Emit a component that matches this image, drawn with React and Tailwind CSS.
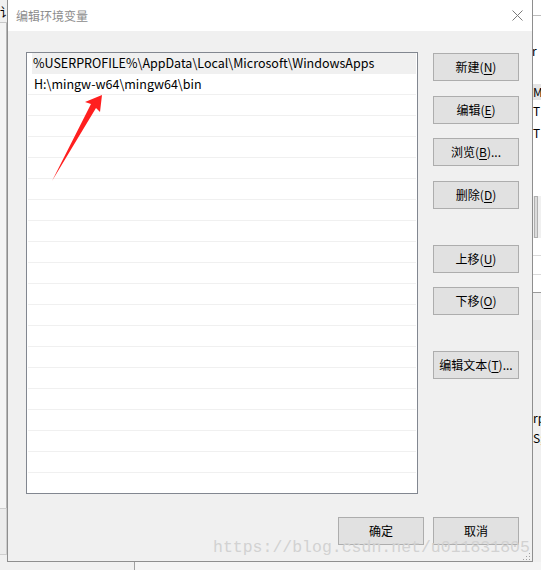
import React from 'react'

const ui = { fontFamily: '"Noto Sans CJK SC", "Noto Sans", sans-serif' }

const paths = [
  '%USERPROFILE%\\AppData\\Local\\Microsoft\\WindowsApps',
  'H:\\mingw-w64\\mingw64\\bin',
]

function Btn({ label, hot, tail = '', className = '' }) {
  return (
    <div
      className={`h-[28px] w-[86px] flex items-center justify-center bg-[#e1e1e1] border border-[#adadad] text-[12px] text-black leading-none ${className}`}
    >
      {label}
      {hot && (
        <>
          (<span className="underline underline-offset-2">{hot}</span>)
        </>
      )}
      {tail}
    </div>
  )
}

export default function App() {
  const emptyRows = Array.from({ length: 18 })

  return (
    <div className="relative w-[541px] h-[570px] overflow-hidden bg-[#f0f0f0]" style={ui}>
      <div className="flex h-[562px]">
        {/* window behind, left */}
        <div className="w-[7px] flex flex-col">
          <div className="h-[23px] border-b border-[#c8c8c8] bg-[#f0f0f0] text-[12px] leading-[23px] overflow-hidden whitespace-nowrap">讠</div>
          <div className="h-[485px] bg-[#f4f4f4] border-r border-[#b8b8b8]" />
          <div className="h-[47px] bg-[#ececec] border-t border-[#cfcfcf] border-b border-r border-[#b8b8b8]" />
        </div>

        {/* dialog */}
        <div className="w-[526px] h-[562px] flex flex-col border border-t-0 border-[#8e8e8e] bg-[#f0f0f0] shadow-[2px_0_3px_rgba(0,0,0,0.2)]">
          <div className="h-[31px] bg-white flex items-center justify-between pl-[8px] pr-[9px]">
            <span className="text-[12px] text-[#8c8c8c]">编辑环境变量</span>
            <svg width="11" height="11" viewBox="0 0 11 11">
              <path d="M0.5 0.5L10.5 10.5M10.5 0.5L0.5 10.5" stroke="#7a7a7a" strokeWidth="1" fill="none" />
            </svg>
          </div>

          <div className="flex-1 flex flex-col pl-[18px] pr-[13px] pt-[21px]">
            <div className="flex gap-[15px]">
              {/* list */}
              <div className="w-[392px] h-[442px] border border-[#828790] bg-white pl-[1px] pr-[1px] overflow-hidden">
                <div className="h-[21px] pl-[4px]">
                  <div className="h-full bg-[#f0f0f0] flex items-center pl-[1px] text-[12.5px] text-black whitespace-nowrap">
                    {paths[0]}
                  </div>
                </div>
                <div className="h-[21px] border-b border-[#f0f0f0] flex items-center pl-[6px] text-[12.5px] text-black">
                  {paths[1]}
                </div>
                {emptyRows.map((_, i) => (
                  <div key={i} className="h-[21px] border-b border-[#f0f0f0]" />
                ))}
              </div>

              {/* button column */}
              <div className="w-[86px] flex flex-col pt-[1px]">
                <Btn label="新建" hot="N" />
                <Btn label="编辑" hot="E" className="mt-[15px]" />
                <Btn label="浏览" hot="B" tail="..." className="mt-[14px]" />
                <Btn label="删除" hot="D" className="mt-[15px]" />
                <Btn label="上移" hot="U" className="mt-[36px]" />
                <Btn label="下移" hot="O" className="mt-[14px]" />
                <Btn label="编辑文本" hot="T" tail="..." className="mt-[36px]" />
              </div>
            </div>

            <div className="flex justify-end gap-[9px] mt-[23px]">
              <Btn label="确定" />
              <Btn label="取消" />
            </div>
          </div>
        </div>

        {/* window behind, right */}
        <div className="w-[8px] flex flex-col text-[12px] text-black overflow-hidden whitespace-nowrap">
          <div className="h-[16px] bg-white border-b border-[#bdbdbd]" />
          <div className="h-[68px] bg-white pt-[29px] leading-none">
            <span className="block -ml-[1px]">r</span>
          </div>
          <div className="h-[16px] bg-[#e5e5e5] leading-[16px]">M</div>
          <div className="h-[22px] bg-white leading-[22px]">T</div>
          <div className="h-[22px] bg-white leading-[22px]">T</div>
          <div className="h-[52px] bg-white" />
          <div className="h-[42px] bg-[#f0f0f0] pl-[1px]">
            <div className="w-[4px] h-full bg-[#dcdcdc] border border-[#b0b0b0]" />
          </div>
          <div className="h-[18px] border-b border-[#dadada] bg-white" />
          <div className="h-[19px] border-b border-[#dadada] bg-white" />
          <div className="h-[18px] border-b border-[#9a9a9a] bg-white" />
          <div className="h-[27px] bg-[#f0f0f0]" />
          <div className="h-[20px] bg-[#e6e6e6]" />
          <div className="h-[68px] bg-[#f0f0f0]" />
          <div className="h-[20px] leading-[20px] bg-[#f0f0f0]">rp</div>
          <div className="h-[20px] leading-[20px] bg-[#f0f0f0]">S;</div>
          <div className="flex-1 bg-[#f0f0f0]" />
        </div>
      </div>

      {/* strip under the dialog */}
      <div className="flex h-[8px]">
        <div className="w-[135px] bg-[#f0f0f0] border-r border-[#a0a0a0]" />
        <div className="flex-1 bg-[#f4f4f4]" />
      </div>

      {/* red arrow annotation */}
      <svg className="absolute left-0 top-0 pointer-events-none" width="541" height="570">
        <polygon points="102,95 85,102 91,104 52,181 96,108 100,112" fill="#ff1f1f" />
      </svg>

      {/* resize grip */}
      <svg className="absolute left-[522px] top-[552px]" width="9" height="9">
        <rect x="7" y="1" width="1" height="1" fill="#a0a0a0" />
        <rect x="4" y="4" width="1" height="1" fill="#a0a0a0" />
        <rect x="7" y="4" width="1" height="1" fill="#a0a0a0" />
        <rect x="1" y="7" width="1" height="1" fill="#a0a0a0" />
        <rect x="4" y="7" width="1" height="1" fill="#a0a0a0" />
        <rect x="7" y="7" width="1" height="1" fill="#a0a0a0" />
      </svg>

      {/* watermark */}
      <div
        className="absolute left-[213px] top-[538px] text-[16.5px] leading-[20px] text-[#d2d2d2] whitespace-nowrap pointer-events-none"
        style={{ fontFamily: '"Liberation Mono", monospace' }}
      >
        https://blog.csdn.net/u011831805
      </div>
    </div>
  )
}
